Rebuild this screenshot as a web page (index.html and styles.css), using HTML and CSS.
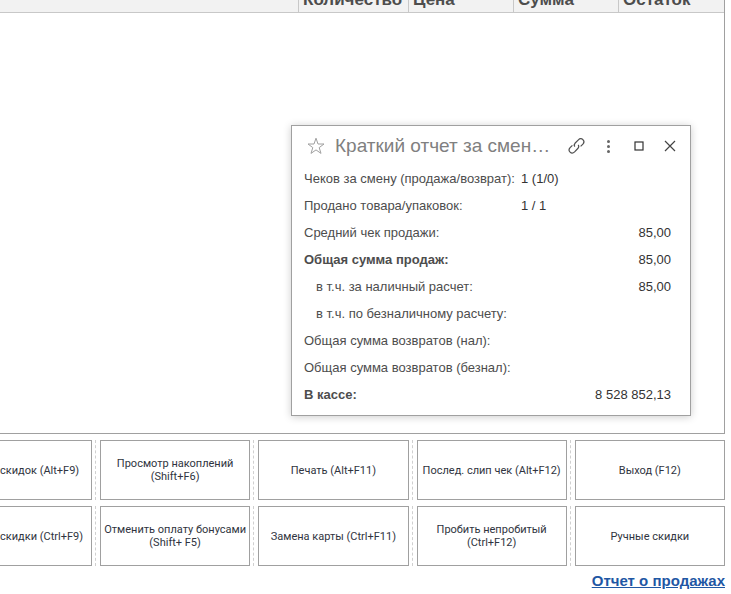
FILE: index.html
```
<!DOCTYPE html>
<html lang="ru">
<head>
    <meta charset="UTF-8">
    <meta name="viewport" content="width=device-width, initial-scale=1.0">
    <title>Краткий отчет за смену</title>
    <link rel="stylesheet" href="styles.css">
</head>
<body>
    <div class="workspace">
        <table class="goods">
            <thead>
                <tr>
                    <th class="col-name"></th>
                    <th><span>Количество</span></th>
                    <th><span>Цена</span></th>
                    <th><span>Сумма</span></th>
                    <th><span>Остаток</span></th>
                </tr>
            </thead>
        </table>

        <section class="report">
            <header class="report-header">
                <button type="button" class="icon-btn star" aria-label="В избранное">
                    <svg width="20" height="20" viewBox="0 0 20 20"><path d="M10 2.2 L12 8 H18 L13.2 11.6 L15 17.4 L10 13.9 L5 17.4 L6.8 11.6 L2 8 H8 Z" fill="none" stroke="#a0a0a0"/></svg>
                </button>
                <h1>Краткий отчет за смен…</h1>
                <button type="button" class="icon-btn" aria-label="Ссылка">
                    <svg width="18" height="18" viewBox="0 0 18 18" fill="none" stroke="#505050" stroke-width="1.2">
                        <path d="M6.8 9.6 C6 8.4 6.2 7 7.2 6 L10.4 2.800 C11.800 1.400 13.600 1.300 14.900 2.600 C16.200 3.900 16.200 5.700 14.900 7.100 L12.600 9.400"/>
                        <path d="M10.200 7.900 C11 9.100 10.800 10.500 9.800 11.500 L6.600 14.900 C5.200 16.300 3.400 16.400 2.100 15.100 C0.800 13.800 0.800 12 2.100 10.600 L4.400 8.300"/>
                    </svg>
                </button>
                <button type="button" class="icon-btn" aria-label="Еще">
                    <svg width="18" height="18" viewBox="0 0 18 18" fill="#666"><circle cx="9.5" cy="4.5" r="1.5"/><circle cx="9.5" cy="9.5" r="1.5"/><circle cx="9.5" cy="14.5" r="1.5"/></svg>
                </button>
                <button type="button" class="icon-btn" aria-label="Развернуть">
                    <svg width="18" height="18" viewBox="0 0 18 18"><rect x="5" y="5" width="8" height="8" fill="none" stroke="#333" stroke-width="1.2"/></svg>
                </button>
                <button type="button" class="icon-btn" aria-label="Закрыть">
                    <svg width="18" height="18" viewBox="0 0 18 18"><path d="M4 4 L14 14 M14 4 L4 14" fill="none" stroke="#444" stroke-width="1.2"/></svg>
                </button>
            </header>
            <dl class="report-rows">
                <dt>Чеков за смену (продажа/возврат):</dt>
                <dd class="text">1 (1/0)</dd>
                <dt>Продано товара/упаковок:</dt>
                <dd class="text">1 / 1</dd>
                <dt>Средний чек продажи:</dt>
                <dd>85,00</dd>
                <dt class="total">Общая сумма продаж:</dt>
                <dd>85,00</dd>
                <dt class="sub">в т.ч. за наличный расчет:</dt>
                <dd>85,00</dd>
                <dt class="sub">в т.ч. по безналичному расчету:</dt>
                <dd></dd>
                <dt>Общая сумма возвратов (нал):</dt>
                <dd></dd>
                <dt>Общая сумма возвратов (безнал):</dt>
                <dd></dd>
                <dt class="total">В кассе:</dt>
                <dd>8 528 852,13</dd>
            </dl>
        </section>
    </div>

    <div class="actions">
        <div class="cell cut"><button type="button">скидок (Alt+F9)</button></div>
        <div class="cell"><button type="button">Просмотр накоплений (Shift+F6)</button></div>
        <div class="cell"><button type="button">Печать (Alt+F11)</button></div>
        <div class="cell"><button type="button">Послед. слип чек (Alt+F12)</button></div>
        <div class="cell"><button type="button">Выход (F12)</button></div>
        <div class="cell cut"><button type="button">скидки (Ctrl+F9)</button></div>
        <div class="cell"><button type="button">Отменить оплату бонусами (Shift+ F5)</button></div>
        <div class="cell"><button type="button">Замена карты (Ctrl+F11)</button></div>
        <div class="cell"><button type="button">Пробить непробитый (Ctrl+F12)</button></div>
        <div class="cell"><button type="button">Ручные скидки</button></div>
    </div>

    <footer class="footer">
        <a href="#">Отчет о продажах</a>
    </footer>
</body>
</html>
```
FILE: styles.css
```
* {
    box-sizing: border-box;
}
body {
    margin: 0;
    padding-right: 6px;
    background: #fff;
    color: #4d4d4d;
    font-family: "Liberation Sans", Arial, sans-serif;
    font-size: 13px;
    overflow: hidden;
}
.workspace {
    position: relative;
    min-height: 434px;
    border-right: 1px solid #a0a0a0;
    border-bottom: 1px solid #a0a0a0;
}

/* goods table, scrolled under the top edge */
.goods {
    width: 100%;
    table-layout: fixed;
    border-collapse: separate;
    border-spacing: 0;
}
.goods th {
    width: 105px;
    padding: 0 0 0 4px;
    background: #f2f2f2;
    border-left: 1px solid #c8c8c8;
    border-bottom: 1px solid #c8c8c8;
    color: #4d4d4d;
    font-size: 17px;
    text-align: left;
}
.goods th span {
    display: flex;
    align-items: flex-end;
    height: 12px;
    padding-bottom: 2px;
    line-height: 20px;
}
.goods th:nth-child(2) {
    width: 110px;
}
.goods th:last-child {
    width: 106px;
}
.goods .col-name {
    width: auto;
    border-left: none;
}

/* report window */
.report {
    position: absolute;
    right: 33px;
    bottom: 17px;
    width: 400px;
    padding: 7px 11px 7px 14px;
    background: #fff;
    border: 1px solid #a0a0a0;
    box-shadow: 0 1px 8px rgba(0, 0, 0, 0.2);
}
.report-header {
    display: flex;
    align-items: center;
    gap: 13px;
    height: 26px;
}
.report h1 {
    flex: 1;
    min-width: 0;
    margin: 0 0 0 -4px;
    color: #808080;
    font-size: 19px;
    font-weight: normal;
    white-space: nowrap;
}
.icon-btn {
    padding: 0;
    border: none;
    background: none;
    cursor: pointer;
}
.icon-btn svg {
    display: block;
}
.report-rows {
    display: grid;
    grid-template-columns: 217px 1fr;
    grid-auto-rows: 27px;
    margin: 6px 0 0 -2px;
    padding-right: 8px;
    line-height: 27px;
    white-space: nowrap;
}
.report-rows dd {
    margin: 0;
    color: #333;
    text-align: right;
}
.report-rows .text {
    text-align: left;
}
.report-rows .sub {
    padding-left: 12px;
}
.report-rows .total {
    font-weight: bold;
}

/* cashier buttons */
.actions {
    display: grid;
    grid-template-columns: 92px repeat(4, 1fr);
    grid-auto-rows: 60px;
    gap: 6px 0;
    margin-top: 6px;
}
.cell {
    display: flex;
    padding-left: 4px;
    margin-left: 3px;
    border-left: 1px dashed #d0d0d0;
}
.cell button {
    flex: 1;
    padding: 0 2px;
    background: #fff;
    border: 1px solid #a0a0a0;
    color: #2f3440;
    font-family: Roboto, sans-serif;
    font-size: 11px;
    line-height: 13px;
    cursor: pointer;
}
.cell button:hover {
    background: #f2f2f2;
}
.cell.cut {
    margin-left: 0;
    padding-left: 0;
    border-left: none;
}
.cut button {
    padding: 0;
    border-left: none;
    text-align: left;
    white-space: nowrap;
}

.footer {
    padding-top: 7px;
    text-align: right;
}
.footer a {
    color: #1f57a4;
    font-size: 15px;
    font-weight: bold;
    line-height: 16px;
}
```
